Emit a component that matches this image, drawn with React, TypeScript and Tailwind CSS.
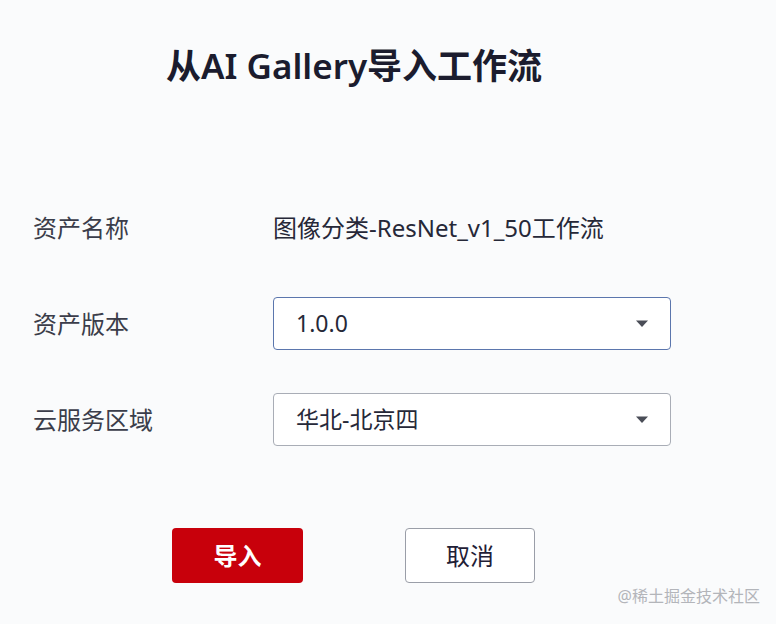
import React from "react";

const font = "font-['Noto_Sans','Noto_Sans_CJK_SC',sans-serif]";

function Caret() {
  return (
    <svg width="14" height="9" viewBox="0 0 14 9" className="shrink-0">
      <path d="M1 1.5h12L7 8z" fill="#4a4d57" />
    </svg>
  );
}

function Select({ value, focused }: { value: string; focused?: boolean }) {
  return (
    <div
      className={`flex h-[53px] w-[398px] items-center justify-between rounded-[4px] border bg-white pl-[22px] pr-[21px] ${
        focused ? "border-[#5b76ad]" : "border-[#a9adb6]"
      }`}
    >
      <span className="text-[23px] text-[#262838]">{value}</span>
      <Caret />
    </div>
  );
}

const App = () => {
  return (
    <main className={`relative h-[624px] w-[776px] overflow-hidden bg-[#fafbfc] ${font}`}>
      <h1 className="pl-[166px] pt-[42px] text-[35px] font-semibold leading-[48px] text-[#1b1c2e]">
        从AI Gallery导入工作流
      </h1>

      <section className="mt-[111px] flex flex-col gap-[43px] pl-[33px]">
        <div className="flex h-[53px] items-center">
          <span className="w-[240px] text-[24px] text-[#3b3d4a]">资产名称</span>
          <span className="text-[24px] text-[#262838]">图像分类-ResNet_v1_50工作流</span>
        </div>
        <div className="flex h-[53px] items-center">
          <span className="w-[240px] text-[24px] text-[#3b3d4a]">资产版本</span>
          <Select value="1.0.0" focused />
        </div>
        <div className="flex h-[53px] items-center">
          <span className="w-[240px] text-[24px] text-[#3b3d4a]">云服务区域</span>
          <Select value="华北-北京四" />
        </div>
      </section>

      <div className="mt-[82px] flex gap-[102px] pl-[172px]">
        <button className="h-[55px] w-[131px] rounded-[4px] bg-[#c8000b] text-[24px] font-bold text-white">
          导入
        </button>
        <button className="h-[55px] w-[130px] rounded-[4px] border border-[#9a9ea8] bg-white text-[24px] text-[#1f2036]">
          取消
        </button>
      </div>

      <div className="absolute bottom-[16px] right-[16px] text-[16px] text-[#b3b5ba]">
        @稀土掘金技术社区
      </div>
    </main>
  );
};

export default App;
